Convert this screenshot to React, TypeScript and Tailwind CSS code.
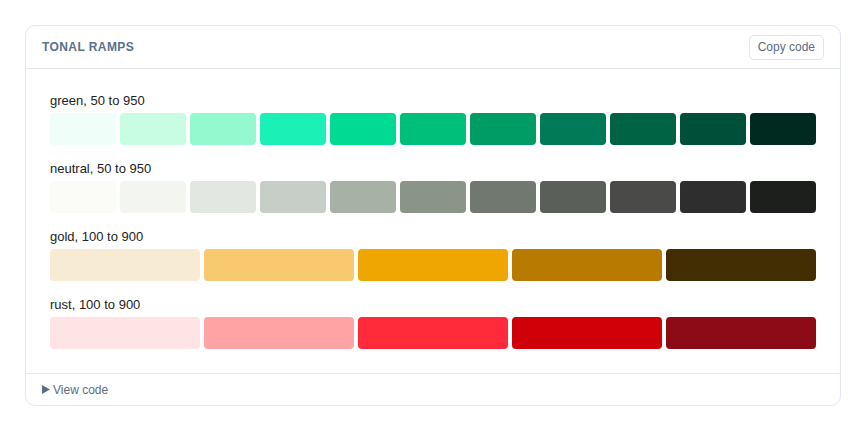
import React from "react";

const ramps: { label: string; colors: string[] }[] = [
  {
    label: "green, 50 to 950",
    colors: ["#effef9", "#c8fde3", "#94f9cf", "#1bf0b7", "#00da92", "#00bf7a", "#009c66", "#007a57", "#006444", "#004f38", "#002a20"],
  },
  {
    label: "neutral, 50 to 950",
    colors: ["#fbfcf8", "#f3f5f1", "#e2e7e2", "#c7cec7", "#a7b1a5", "#8a9588", "#707870", "#5a5f5a", "#4a4a48", "#2e2e2e", "#1d1f1d"],
  },
  {
    label: "gold, 100 to 900",
    colors: ["#f8ebd3", "#f8c96e", "#f0a601", "#b87a00", "#432e04"],
  },
  {
    label: "rust, 100 to 900",
    colors: ["#ffe3e5", "#ffa3a5", "#ff2b3b", "#d00008", "#8d0b17"],
  },
];

export default function App() {
  return (
    <div className="w-[866px] h-[432px] bg-white p-[25px] font-['Liberation_Sans',Arial,sans-serif]">
      <div className="w-[816px] border border-[#e3e8f0] rounded-[10px] bg-white">
        <div className="h-[43px] flex items-center justify-between pl-4 pr-4 border-b border-[#e3e8f0]">
          <span className="text-[12px] font-bold tracking-[0.035em] text-[#5c6f8c] uppercase">Tonal ramps</span>
          <button className="h-[25px] px-2 rounded-[5px] border border-[#dfe5ee] text-[12px] text-[#5b6c86] bg-white">
            Copy code
          </button>
        </div>
        <div className="px-6 py-6 flex flex-col gap-4">
          {ramps.map((r) => (
            <div key={r.label}>
              <div className="text-[13px] leading-4 text-[#222] mb-1">{r.label}</div>
              <div className="flex gap-1">
                {r.colors.map((c) => (
                  <div key={c} className="flex-1 h-[32px] rounded-[4px]" style={{ backgroundColor: c }} />
                ))}
              </div>
            </div>
          ))}
        </div>
        <div className="h-[32px] border-t border-[#e3e8f0] flex items-center pl-4 text-[12px] text-[#5b6c86]">
          <svg width="8" height="9" viewBox="0 0 8 9" className="mr-[3px]">
            <path d="M0 0 L8 4.5 L0 9 Z" fill="#5b6c86" />
          </svg>
          <span>View code</span>
        </div>
      </div>
    </div>
  );
}
